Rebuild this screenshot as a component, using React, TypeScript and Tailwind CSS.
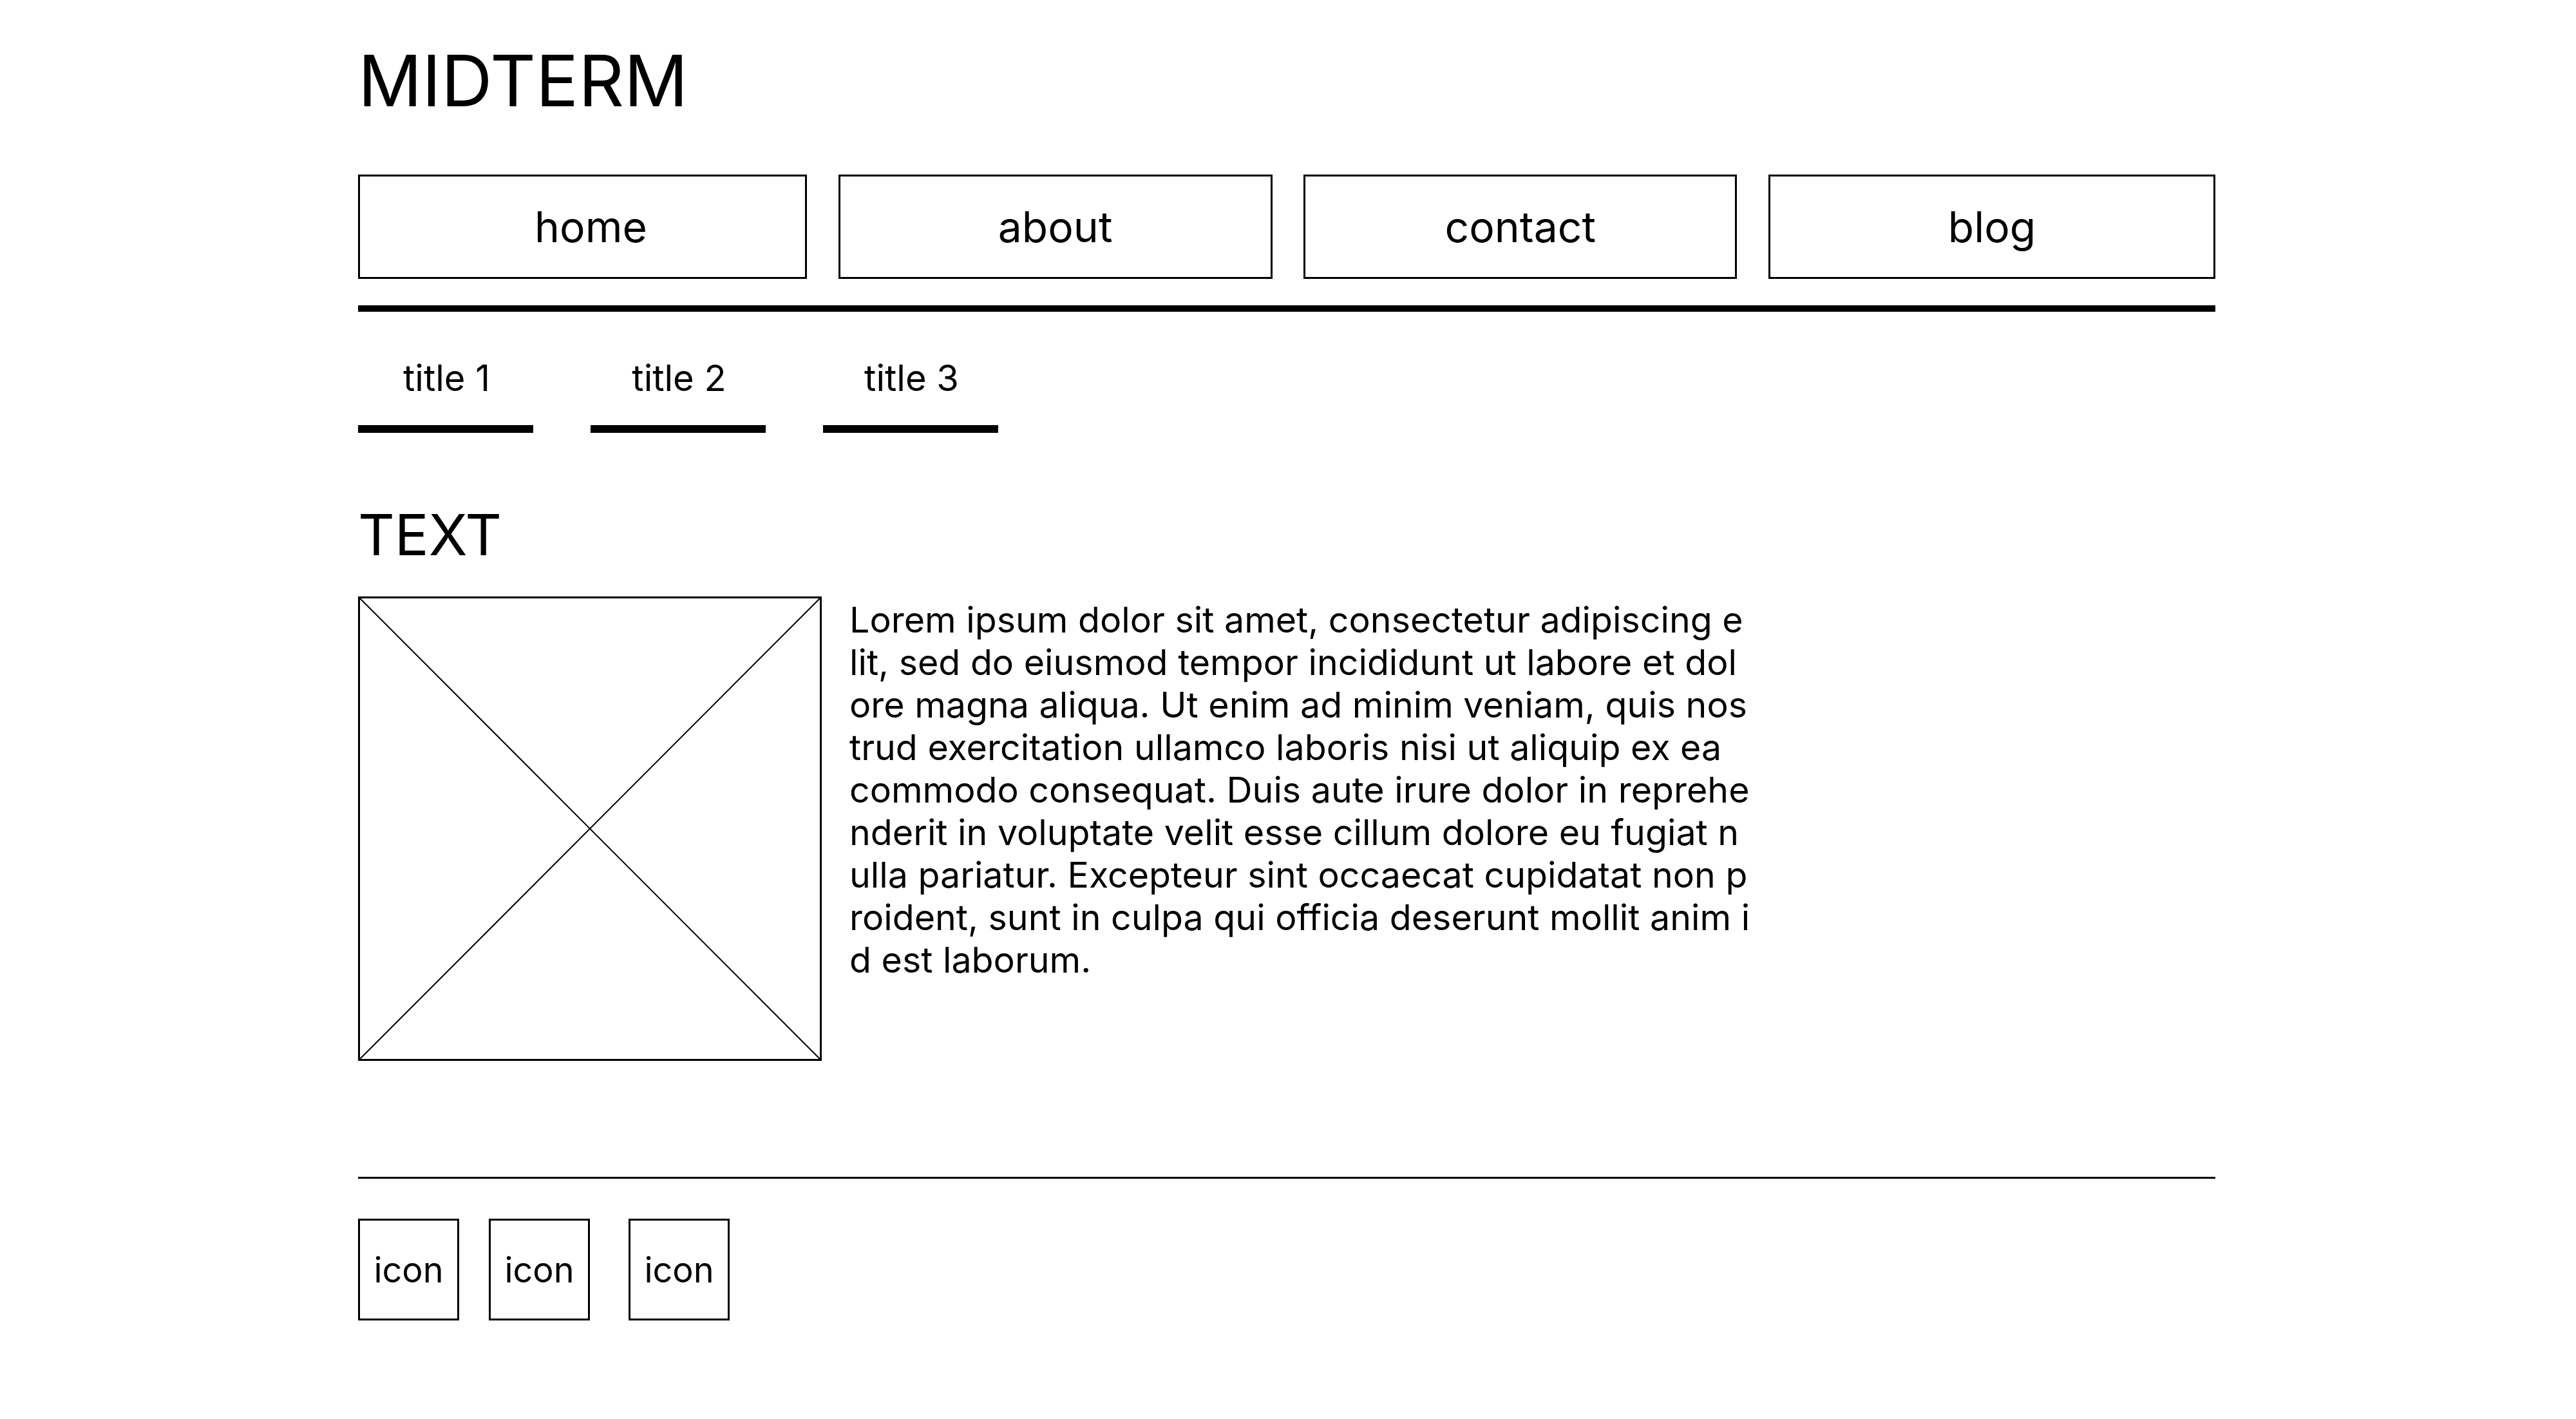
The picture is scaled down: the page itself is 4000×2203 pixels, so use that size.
const navItems = [
  { label: "home", width: "w-[697px] pl-[26px]" },
  { label: "about", width: "w-[674px]" },
  { label: "contact", width: "w-[673px]" },
  { label: "blog", width: "w-[694px]" },
];
const tabs = ["title 1", "title 2", "title 3"];

const lorem =
  "Lorem ipsum dolor sit amet, consectetur adipiscing elit, sed do eiusmod tempor incididunt ut labore et dolore magna aliqua. Ut enim ad minim veniam, quis nostrud exercitation ullamco laboris nisi ut aliquip ex ea commodo consequat. Duis aute irure dolor in reprehenderit in voluptate velit esse cillum dolore eu fugiat nulla pariatur. Excepteur sint occaecat cupidatat non proident, sunt in culpa qui officia deserunt mollit anim id est laborum.";

function ImagePlaceholder() {
  return (
    <div className="relative h-[721px] w-[720px] shrink-0 border-[3px] border-black">
      <svg
        className="absolute inset-0 h-full w-full"
        viewBox="0 0 100 100"
        preserveAspectRatio="none"
      >
        <line x1="0" y1="0" x2="100" y2="100" stroke="black" strokeWidth="2" vectorEffect="non-scaling-stroke" />
        <line x1="100" y1="0" x2="0" y2="100" stroke="black" strokeWidth="2" vectorEffect="non-scaling-stroke" />
      </svg>
    </div>
  );
}

export default function App() {
  return (
    <div className="min-h-screen bg-white font-['Inter',sans-serif] text-black">
      <div className="ml-[556px] w-[2884px] pt-[70px]">
        <h1 className="text-[110px] leading-none font-normal">MIDTERM</h1>

        <nav className="mt-[91px] flex justify-between">
          {navItems.map((item) => (
            <div
              key={item.label}
              className={`flex h-[162px] items-center justify-center border-[3px] border-black text-[66px] ${item.width}`}
            >
              {item.label}
            </div>
          ))}
        </nav>

        <div className="mt-[41px] h-[10px] bg-black" />

        <div className="mt-[75px] flex gap-[89px]">
          {tabs.map((tab) => (
            <div key={tab} className="flex w-[272px] flex-col items-center">
              <span className="pl-[3px] text-[56px] leading-[56px]">{tab}</span>
              <div className="mt-[45px] h-[12px] w-full bg-black" />
            </div>
          ))}
        </div>

        <h2 className="mt-[114px] text-[88px] leading-[88px] font-normal">TEXT</h2>

        <section className="mt-[52px] flex gap-[43px]">
          <ImagePlaceholder />
          <p className="w-[1399px] break-all pt-[3px] text-[55.5px] leading-[66px]">{lorem}</p>
        </section>

        <div className="mt-[180px] h-[3px] bg-black" />

        <footer className="mt-[62px] flex">
          <div className="flex h-[158px] w-[157px] items-center justify-center border-[3px] border-black text-[54px]">icon</div>
          <div className="ml-[46px] flex h-[158px] w-[157px] items-center justify-center border-[3px] border-black text-[54px]">icon</div>
          <div className="ml-[60px] flex h-[158px] w-[157px] items-center justify-center border-[3px] border-black text-[54px]">icon</div>
        </footer>
      </div>
    </div>
  );
}
